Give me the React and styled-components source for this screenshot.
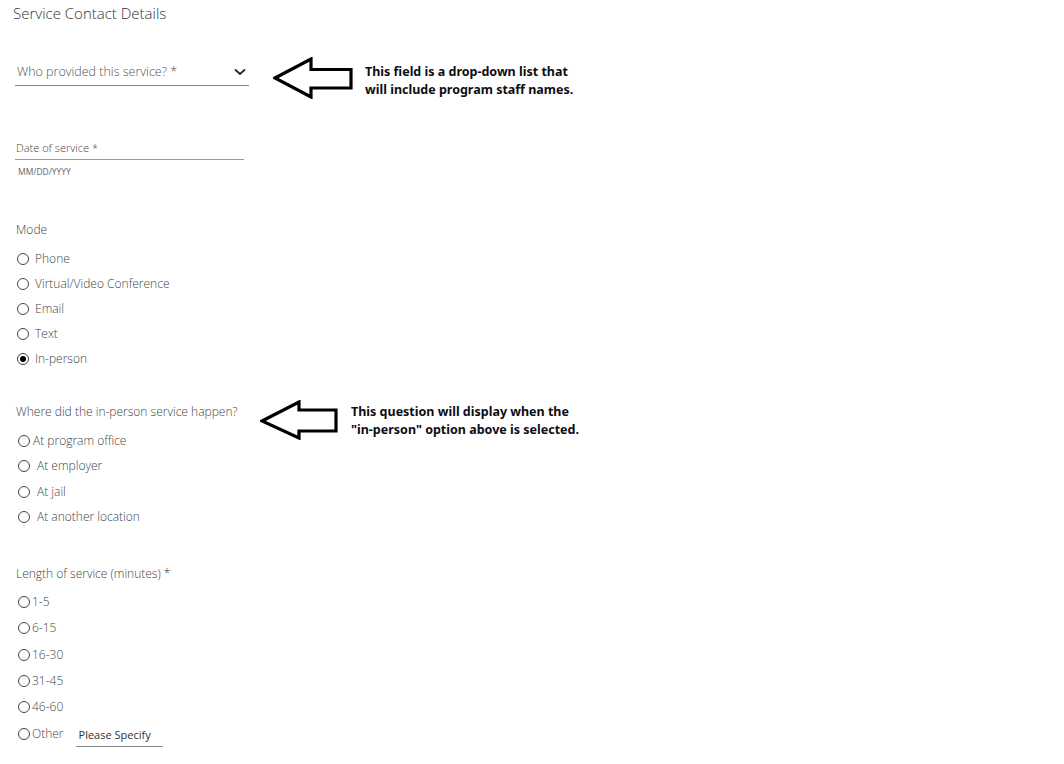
import React from 'react';
import styled, { createGlobalStyle } from 'styled-components';

const GlobalStyle = createGlobalStyle`
  html, body {
    margin: 0;
    padding: 0;
    background: #ffffff;
  }
  body {
    font-family: "Segoe UI", "Open Sans", "Noto Sans", sans-serif;
    color: #444;
  }
`;

const modes = ['Phone', 'Virtual/Video Conference', 'Email', 'Text', 'In-person'];
const places = ['At program office', 'At employer', 'At jail', 'At another location'];
const lengths = ['1-5', '6-15', '16-30', '31-45', '46-60'];

const Arrow = ({ w, h, points }) => (
    <ArrowSvg width={w} height={h} viewBox={`0 0 ${w} ${h}`}>
        <polygon
            points={points}
            fill="#fff"
            stroke="#000"
            strokeWidth="3.2"
            strokeLinejoin="miter"
        />
    </ArrowSvg>
);

const Radio = ({ label, checked, indent, gap }) => (
    <OptionRow $indent={indent} $gap={gap}>
        <Circle $checked={checked} />
        <OptionText>{label}</OptionText>
    </OptionRow>
);

const App = () => {
    return (
        <>
            <GlobalStyle />
            <Page>
                <Title>Service Contact Details</Title>

                <AnnotatedRow $top={35}>
                    <Select>
                        <SelectText>Who provided this service? *</SelectText>
                        <svg width="12" height="8" viewBox="0 0 12 8">
                            <polyline points="1,1.5 6,6 11,1.5" fill="none" stroke="#222" strokeWidth="1.7" />
                        </svg>
                    </Select>
                    <ArrowSlot $left={24} $top={-1}>
                        <Arrow w={80} h={42} points="2,21 38,2 38,12.5 78,12.5 78,31 38,31 38,40" />
                    </ArrowSlot>
                    <Note $left={12} $top={5}>
                        This field is a drop-down list that<br />
                        will include program staff names.
                    </Note>
                </AnnotatedRow>

                <DateField>Date of service *</DateField>
                <Hint>MM/DD/YYYY</Hint>

                <Question $top={43}>Mode</Question>
                <OptionList $top={10} $gap={5}>
                    {modes.map((m) => (
                        <Radio key={m} label={m} checked={m === 'In-person'} indent={2} gap={6} />
                    ))}
                </OptionList>

                <AnnotatedRow $top={33}>
                    <QuestionColumn>
                        <Question $top={1}>Where did the in-person service happen?</Question>
                        <OptionList $top={10} $gap={5.3}>
                            {places.map((p, i) => (
                                <Radio key={p} label={p} indent={3} gap={i === 0 ? 3 : 7} />
                            ))}
                        </OptionList>
                    </QuestionColumn>
                    <ArrowSlot $left={0} $top={-2}>
                        <Arrow w={78} h={40} points="2,21 39,2 39,10 76,10 76,31 39,31 39,38" />
                    </ArrowSlot>
                    <Note $left={13} $top={1}>
                        This question will display when the<br />
                        "in-person" option above is selected.
                    </Note>
                </AnnotatedRow>

                <Question $top={38}>Length of service (minutes) *</Question>
                <OptionList $top={9} $gap={6.4}>
                    {lengths.map((l) => (
                        <Radio key={l} label={l} indent={3} gap={2} />
                    ))}
                    <OptionRow $indent={3} $gap={2}>
                        <Circle />
                        <OptionText>Other</OptionText>
                        <SpecifyInput>Please Specify</SpecifyInput>
                    </OptionRow>
                </OptionList>
            </Page>
        </>
    );
};

// Styled Components
const Page = styled.div`
  width: 1064px;
  min-height: 764px;
  box-sizing: border-box;
  padding: 3px 0 0 15px;
  display: flex;
  flex-direction: column;
  align-items: flex-start;
`;

const Title = styled.h1`
  margin: 0 0 0 -2px;
  font-size: 15px;
  line-height: 20px;
  font-weight: 300;
  color: #333;
`;

const AnnotatedRow = styled.div`
  display: flex;
  align-items: flex-start;
  margin-top: ${(p) => p.$top}px;
`;

const Select = styled.div`
  width: 234px;
  height: 28px;
  box-sizing: border-box;
  display: flex;
  align-items: center;
  justify-content: space-between;
  padding: 0 3px 0 2px;
  border-bottom: 1px solid #8a8a8a;
`;

const SelectText = styled.span`
  font-size: 12.5px;
  font-weight: 300;
  color: #555;
`;

const ArrowSlot = styled.div`
  margin-left: ${(p) => p.$left}px;
  margin-top: ${(p) => p.$top || 0}px;
  display: flex;
`;

const ArrowSvg = styled.svg`
  display: block;
`;

const Note = styled.p`
  margin: ${(p) => p.$top}px 0 0 ${(p) => p.$left}px;
  font-family: "Noto Sans", "Open Sans", sans-serif;
  font-weight: 700;
  font-size: 12.5px;
  line-height: 18px;
  color: #0d0d14;
  white-space: nowrap;
`;

const DateField = styled.div`
  margin-top: 40px;
  width: 229px;
  padding: 0 0 2px 1px;
  box-sizing: border-box;
  font-size: 11px;
  font-weight: 300;
  line-height: 18px;
  color: #444;
  border-bottom: 1px solid #9a9a9a;
`;

const Hint = styled.div`
  margin: 6px 0 0 3px;
  font-size: 8.5px;
  line-height: 12px;
  color: #666;
`;

const QuestionColumn = styled.div`
  width: 245px;
  display: flex;
  flex-direction: column;
`;

const Question = styled.div`
  margin: ${(p) => p.$top}px 0 0 1px;
  font-size: 12px;
  font-weight: 300;
  line-height: 18px;
  color: #444;
  white-space: nowrap;
`;

const OptionList = styled.div`
  display: flex;
  flex-direction: column;
  gap: ${(p) => p.$gap}px;
  margin-top: ${(p) => p.$top}px;
`;

const OptionRow = styled.div`
  display: flex;
  align-items: center;
  height: 20px;
  padding-left: ${(p) => p.$indent}px;
  gap: ${(p) => p.$gap}px;
`;

const Circle = styled.span`
  width: 12px;
  height: 12px;
  box-sizing: border-box;
  border-radius: 50%;
  border: 1px solid #444;
  flex-shrink: 0;
  display: flex;
  align-items: center;
  justify-content: center;

  &::after {
    content: '';
    display: ${(p) => (p.$checked ? 'block' : 'none')};
    width: 6px;
    height: 6px;
    border-radius: 50%;
    background: #000;
  }
`;

const OptionText = styled.span`
  font-size: 12px;
  font-weight: 300;
  line-height: 20px;
  color: #444;
`;

const SpecifyInput = styled.span`
  align-self: flex-start;
  margin: 1px 0 0 10px;
  width: 87px;
  box-sizing: border-box;
  padding: 0 0 1px 3px;
  font-size: 11px;
  line-height: 20px;
  color: #333;
  border-bottom: 1px solid #888;
`;

export default App;
